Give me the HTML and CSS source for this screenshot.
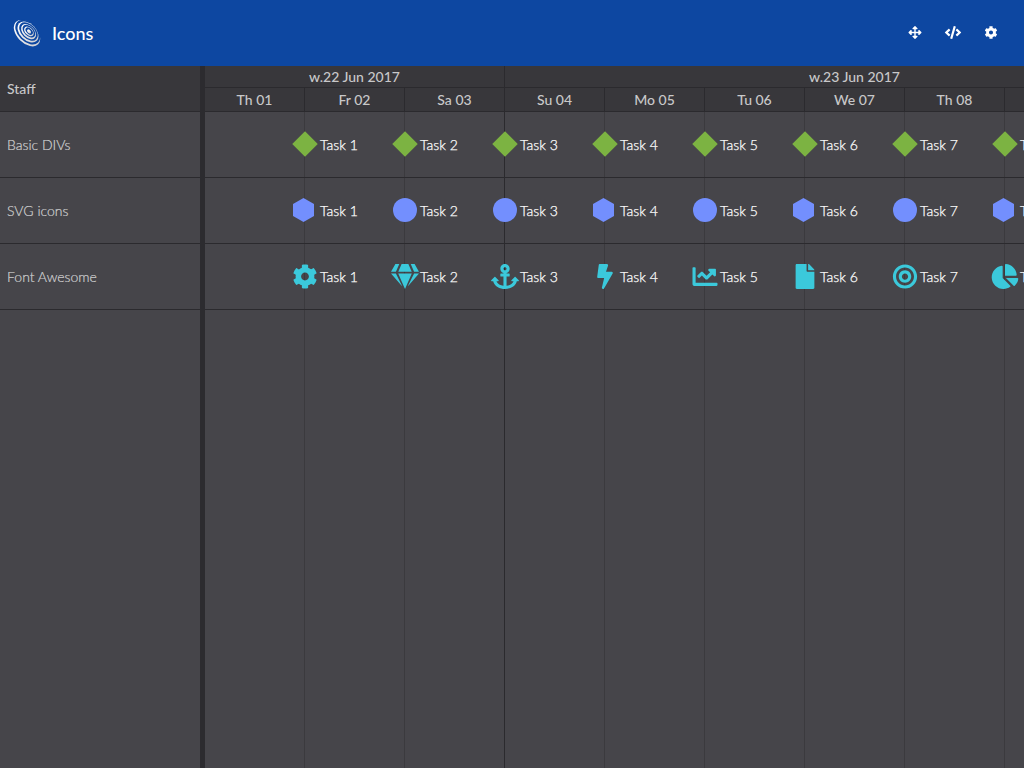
FILE: index.html
```html
<!DOCTYPE html>
<html lang="en">
<head>
<meta charset="utf-8">
<title>Icons</title>
<link rel="stylesheet" href="styles.css">
</head>
<body>
<svg class="defs">
<symbol id="cog" viewBox="0 0 512 512"><path d="M487.4 315.7l-42.6-24.6c4.3-23.2 4.3-47 0-70.2l42.6-24.6c4.9-2.8 7.1-8.6 5.5-14-11.1-35.6-30-67.8-54.7-94.6-3.8-4.1-10-5.1-14.8-2.3L380.8 110c-17.9-15.4-38.5-27.3-60.8-35.1V25.8c0-5.6-3.9-10.5-9.4-11.7-36.7-8.2-74.3-7.8-109.2 0-5.5 1.2-9.4 6.1-9.4 11.7V75c-22.2 7.9-42.8 19.8-60.8 35.1L88.7 85.5c-4.9-2.8-11-1.9-14.8 2.3-24.7 26.7-43.6 58.9-54.7 94.6-1.7 5.4.6 11.2 5.5 14L67.3 221c-4.3 23.2-4.3 47 0 70.2l-42.6 24.6c-4.9 2.8-7.1 8.6-5.5 14 11.1 35.6 30 67.8 54.7 94.6 3.8 4.1 10 5.1 14.8 2.3l42.6-24.6c17.9 15.4 38.5 27.3 60.8 35.1v49.2c0 5.6 3.9 10.5 9.4 11.7 36.7 8.2 74.3 7.8 109.2 0 5.5-1.2 9.4-6.1 9.4-11.7v-49.2c22.2-7.9 42.8-19.8 60.8-35.1l42.6 24.6c4.9 2.8 11 1.9 14.8-2.3 24.7-26.7 43.6-58.9 54.7-94.6 1.5-5.5-.7-11.3-5.6-14.1zM256 336c-44.1 0-80-35.9-80-80s35.9-80 80-80 80 35.9 80 80-35.9 80-80 80z"/></symbol>
<symbol id="gem" viewBox="0 0 576 512"><path d="M485.5 0L576 160H474.9L405.7 0h79.8zm-128 0l69.2 160H149.3L218.5 0h139zm-267 0h79.8l-69.2 160H0L90.5 0zM0 192h100.7l123 251.7c1.5 3.1-2.7 5.9-5 3.3L0 192zm148.2 0h279.6l-137 318.2c-1 2.4-4.5 2.4-5.5 0L148.2 192zm204.1 251.7l123-251.7H576L357.3 446.9c-2.3 2.7-6.5-.1-5-3.2z"/></symbol>
<symbol id="anchor" viewBox="0 0 576 512"><path d="M12.971 352h32.394C67.172 454.735 181.944 512 288 512c106.229 0 220.853-57.38 242.635-160h32.394c10.691 0 16.045-12.926 8.485-20.485l-67.029-67.029c-4.686-4.686-12.284-4.686-16.971 0l-67.029 67.029c-7.56 7.56-2.206 20.485 8.485 20.485h35.146c-20.29 54.317-84.963 86.588-144.117 94.015V256h52c6.627 0 12-5.373 12-12v-40c0-6.627-5.373-12-12-12h-52v-5.47c37.281-13.227 63.995-48.725 64-90.518C384.005 43.772 341.605.738 289.37.01 235.723-.739 192 42.525 192 96c0 41.798 26.716 77.301 64 90.53V192h-52c-6.627 0-12 5.373-12 12v40c0 6.627 5.373 12 12 12h52v190.015c-58.936-7.399-123.82-39.679-144.117-94.015h35.146c10.691 0 16.045-12.926 8.485-20.485l-67.029-67.029c-4.686-4.686-12.284-4.686-16.971 0L4.485 331.515C-3.074 339.074 2.28 352 12.971 352zM288 64c17.645 0 32 14.355 32 32s-14.355 32-32 32-32-14.355-32-32 14.355-32 32-32z"/></symbol>
<symbol id="bolt" viewBox="0 0 320 512"><path d="M296 160H180.6l42.6-129.8C227.2 15 215.7 0 200 0H56C44 0 33.8 8.9 32.2 20.8l-32 240C-1.7 275.2 9.5 288 24 288h118.7L96.6 482.5c-3.6 15.2 8 29.5 23.3 29.5 8.4 0 16.4-4.4 20.8-12l176-304c9.3-15.9-2.2-36-20.7-36z"/></symbol>
<symbol id="line" viewBox="0 0 512 512"><path d="M496 384H64V80c0-8.84-7.16-16-16-16H16C7.16 64 0 71.16 0 80v336c0 17.67 14.33 32 32 32h464c8.84 0 16-7.16 16-16v-32c0-8.84-7.16-16-16-16zM464 96H345.94c-21.38 0-32.09 25.85-16.97 40.97l32.4 32.4L288 242.75l-73.37-73.37c-12.5-12.5-32.76-12.5-45.25 0l-68.69 68.69c-6.25 6.25-6.25 16.38 0 22.63l22.62 22.62c6.25 6.25 16.38 6.25 22.63 0L192 237.25l73.37 73.37c12.5 12.5 32.76 12.5 45.25 0l96-96 32.4 32.4c15.12 15.12 40.97 4.41 40.97-16.97V112c.01-8.84-7.15-16-15.99-16z"/></symbol>
<symbol id="file" viewBox="0 0 384 512"><path d="M224 136V0H24C10.7 0 0 10.7 0 24v464c0 13.3 10.7 24 24 24h336c13.3 0 24-10.7 24-24V160H248c-13.2 0-24-10.8-24-24zm160-14.1v6.1H256V0h6.1c6.4 0 12.5 2.5 17 7l97.9 98c4.5 4.5 7 10.6 7 16.9z"/></symbol>
<symbol id="bullseye" viewBox="0 0 496 512"><path d="M248 8C111.03 8 0 119.03 0 256s111.03 248 248 248 248-111.03 248-248S384.97 8 248 8zm0 432c-101.69 0-184-82.29-184-184 0-101.69 82.29-184 184-184 101.69 0 184 82.29 184 184 0 101.69-82.29 184-184 184zm0-312c-70.69 0-128 57.31-128 128s57.31 128 128 128 128-57.31 128-128-57.31-128-128-128zm0 192c-35.29 0-64-28.71-64-64s28.71-64 64-64 64 28.71 64 64-28.71 64-64 64z"/></symbol>
<symbol id="pie" viewBox="0 0 544 512"><path d="M527.79 288H290.5l158.03 158.03c6.04 6.04 15.98 6.53 22.19.68 38.7-36.46 65.32-85.61 73.13-140.86 1.34-9.46-6.51-17.85-16.06-17.85zm-15.83-64.8C503.72 103.74 408.26 8.28 288.8.04 279.68-.59 272 7.1 272 16.24V240h223.77c9.14 0 16.82-7.68 16.19-16.8zM224 288V50.71c0-9.55-8.39-17.4-17.84-16.06C86.99 51.49-4.1 155.6.14 280.37 4.5 408.51 114.83 513.59 243.03 511.98c50.4-.63 96.97-16.87 135.26-44.03 7.9-5.6 8.42-17.23 1.57-24.08L224 288z"/></symbol>
<symbol id="code" viewBox="0 0 640 512"><path d="M278.9 511.5l-61-17.7c-6.4-1.8-10-8.5-8.2-14.9L346.2 8.7c1.8-6.4 8.5-10 14.9-8.2l61 17.7c6.4 1.8 10 8.5 8.2 14.9L293.8 503.3c-1.9 6.4-8.5 10.1-14.9 8.2zm-114-112.2l43.5-46.4c4.6-4.9 4.3-12.7-.8-17.2L117 256l90.6-79.7c5.1-4.5 5.5-12.3.8-17.2l-43.5-46.4c-4.5-4.8-12.1-5.1-17-.5L3.8 247.2c-5.1 4.7-5.1 12.8 0 17.5l144.1 135.1c4.9 4.6 12.5 4.4 17-.5zm327.2.6l144.1-135.1c5.1-4.7 5.1-12.8 0-17.5L492.1 112.1c-4.8-4.5-12.4-4.3-17 .5L431.6 159c-4.6 4.9-4.3 12.7.8 17.2L523 256l-90.6 79.7c-5.1 4.5-5.5 12.3-.8 17.2l43.5 46.4c4.5 4.9 12.1 5.1 17 .6z"/></symbol>
<symbol id="arrows" viewBox="0 0 512 512"><path d="M352.201 425.775l-79.196 79.196c-9.373 9.373-24.568 9.373-33.941 0l-79.196-79.196c-15.119-15.119-4.411-40.971 16.971-40.97h51.162L228 284H127.196v51.162c0 21.382-25.851 32.09-40.971 16.971L7.029 272.937c-9.373-9.373-9.373-24.569 0-33.941L86.225 159.8c15.119-15.119 40.971-4.411 40.971 16.971V228H228V127.196h-51.23c-21.382 0-32.09-25.851-16.971-40.971l79.196-79.196c9.373-9.373 24.568-9.373 33.941 0l79.196 79.196c15.119 15.119 4.411 40.971-16.971 40.971h-51.162V228h100.804v-51.162c0-21.382 25.851-32.09 40.97-16.971l79.196 79.196c9.373 9.373 9.373 24.569 0 33.941L425.773 352.2c-15.119 15.119-40.971 4.411-40.97-16.971V284H284v100.804h51.23c21.382 0 32.09 25.851 16.971 40.971z"/></symbol>
<symbol id="circle" viewBox="0 0 24 24"><circle cx="12" cy="12" r="12"/></symbol>
<symbol id="hexagon" viewBox="0 0 24 24"><path d="M10.5 0L21 6v12l-10.5 6L0 18V6z"/></symbol>
</svg>
<header class="topbar">
  <svg class="logo" viewBox="0 0 28 28">
    <defs><linearGradient id="shade" x1="0" y1="0" x2="1" y2="0"><stop offset="0" stop-color="#fff"/><stop offset="1" stop-color="#cfd0d4"/></linearGradient></defs>
    <g transform="translate(14 14.2) rotate(45)">
      <ellipse class="band" rx="15.8" ry="9.9"/>
      <ellipse class="gap" cx="-.3" cy="-1.3" rx="14.7" ry="9.6"/>
      <ellipse class="band" cx="-.1" cy="-1.5" rx="12.4" ry="8.1"/>
      <ellipse class="gap" cx="-.2" cy="-2.3" rx="11" ry="7.1"/>
      <ellipse class="band" cx="0" cy="-2.2" rx="8.9" ry="5.8"/>
      <ellipse class="gap" cx="-.1" cy="-2.8" rx="7.6" ry="4.8"/>
      <ellipse class="band" cx=".1" cy="-2.6" rx="5.7" ry="3.7"/>
      <ellipse class="gap" cx=".1" cy="-3" rx="4.4" ry="2.7"/>
      <ellipse class="band" cx=".2" cy="-2.7" rx="2.4" ry="1.5"/>
    </g>
  </svg>
  <h1 class="title">Icons</h1>
  <nav class="tools">
    <svg class="tool"><use href="#arrows"/></svg>
    <svg class="tool"><use href="#code"/></svg>
    <svg class="tool"><use href="#cog"/></svg>
  </nav>
</header>
<main class="scheduler">
  <aside class="staff">
    <div class="staff-head">Staff</div>
    <div class="staff-cell">Basic DIVs</div>
    <div class="staff-cell">SVG icons</div>
    <div class="staff-cell">Font Awesome</div>
  </aside>
  <div class="splitter"></div>
  <section class="timeline">
    <div class="weeks"><div class="week first">w.22 Jun 2017</div><div class="week">w.23 Jun 2017</div></div>
    <div class="days" id="days"></div>
    <div class="grid" id="grid"></div>
  </section>
</main>
<script src="app.js"></script>
</body>
</html>
```
FILE: styles.css
```css
* { box-sizing: border-box; }
body { margin: 0; height: 768px; overflow: hidden; display: flex; flex-direction: column; background: #46454a; font: 14px/20px Lato, sans-serif; color: #c8c8c9; }
.defs { display: none; }
.topbar { height: 66px; flex: none; display: flex; align-items: center; padding: 0 24px 0 13px; background: #0d47a1; color: #fff; }
.logo { width: 28px; height: 28px; flex: none; }
.band { fill: url(#shade); }
.gap { fill: #0d47a1; }
.title { margin: 0 0 0 11px; font-size: 18px; font-weight: 500; line-height: 24px; padding-bottom: 1px; }
.tools { margin-left: auto; display: flex; gap: 20px; }
.tool { width: 18px; height: 13px; fill: #fff; margin-bottom: 1px; }
.scheduler { flex: 1; display: flex; min-height: 0; }
.staff { width: 200px; flex: none; }
.staff-head { height: 46px; padding: 13px 7px; background: #38373b; border-bottom: 1px solid #2b2a2e; font-weight: 500; }
.staff-cell { height: 66px; padding: 23px 7px 0; border-bottom: 1px solid #2b2a2e; font-weight: 300; color: #d0d0d1; -webkit-text-stroke: .2px; }
.splitter { width: 5px; flex: none; background: #2c2b2f; }
.timeline { flex: 1; min-width: 0; overflow: hidden; display: flex; flex-direction: column; }
.weeks, .days { display: flex; background: #38373b; border-bottom: 1px solid #2b2a2e; text-align: center; flex: none; font-weight: 500; }
.weeks { height: 22px; }
.week { flex: none; width: 699px; line-height: 22px; }
.week.first { width: 300px; border-right: 1px solid #2b2a2e; }
.days { height: 24px; }
.day { flex: none; width: 100px; line-height: 24px; border-right: 1px solid #2b2a2e; }
.grid { flex: 1; background: linear-gradient(#2b2a2e, #2b2a2e) 299px 0 / 1px 100% no-repeat, repeating-linear-gradient(90deg, transparent 0 99px, #3b3a3e 99px 100px); }
.row { height: 66px; display: flex; padding-left: 84px; border-bottom: 1px solid #2b2a2e; }
.task { flex: none; width: 100px; display: flex; align-items: center; color: #fff; font-weight: 300; white-space: nowrap; }
.marker { width: 31px; height: 26px; flex: none; display: flex; align-items: center; justify-content: center; padding-left: 1px; }
.label { padding-top: 1px; -webkit-text-stroke: .25px; }
.diamond { width: 18px; height: 18px; margin-bottom: 1px; background: #7cb342; transform: rotate(45deg); }
.shape { width: 24px; height: 24px; margin-bottom: 1px; fill: #738ffe; }
.glyph { width: 28px; height: 25px; flex: none; margin: 0 1px 1px 0; fill: #3bc9db; }
```
FILE: app.js
```js
const days = ['Th 01', 'Fr 02', 'Sa 03', 'Su 04', 'Mo 05', 'Tu 06', 'We 07', 'Th 08', 'Fr 09'];
const shapes = ['hexagon', 'circle', 'circle', 'hexagon', 'circle', 'hexagon', 'circle', 'hexagon'];
const glyphs = ['cog', 'gem', 'anchor', 'bolt', 'line', 'file', 'bullseye', 'pie'];

const svg = (cls, id) => `<svg class="${cls}"><use href="#${id}"/></svg>`;
const row = markers => `<div class="row">${markers.map((m, i) =>
  `<div class="task"><span class="marker">${m}</span><span class="label">Task ${i + 1}</span></div>`).join('')}</div>`;

document.getElementById('days').innerHTML = days.map(d => `<div class="day">${d}</div>`).join('');
document.getElementById('grid').innerHTML =
  row(shapes.map(() => '<i class="diamond"></i>')) +
  row(shapes.map(s => svg('shape', s))) +
  row(glyphs.map(g => svg('glyph', g)));
```
